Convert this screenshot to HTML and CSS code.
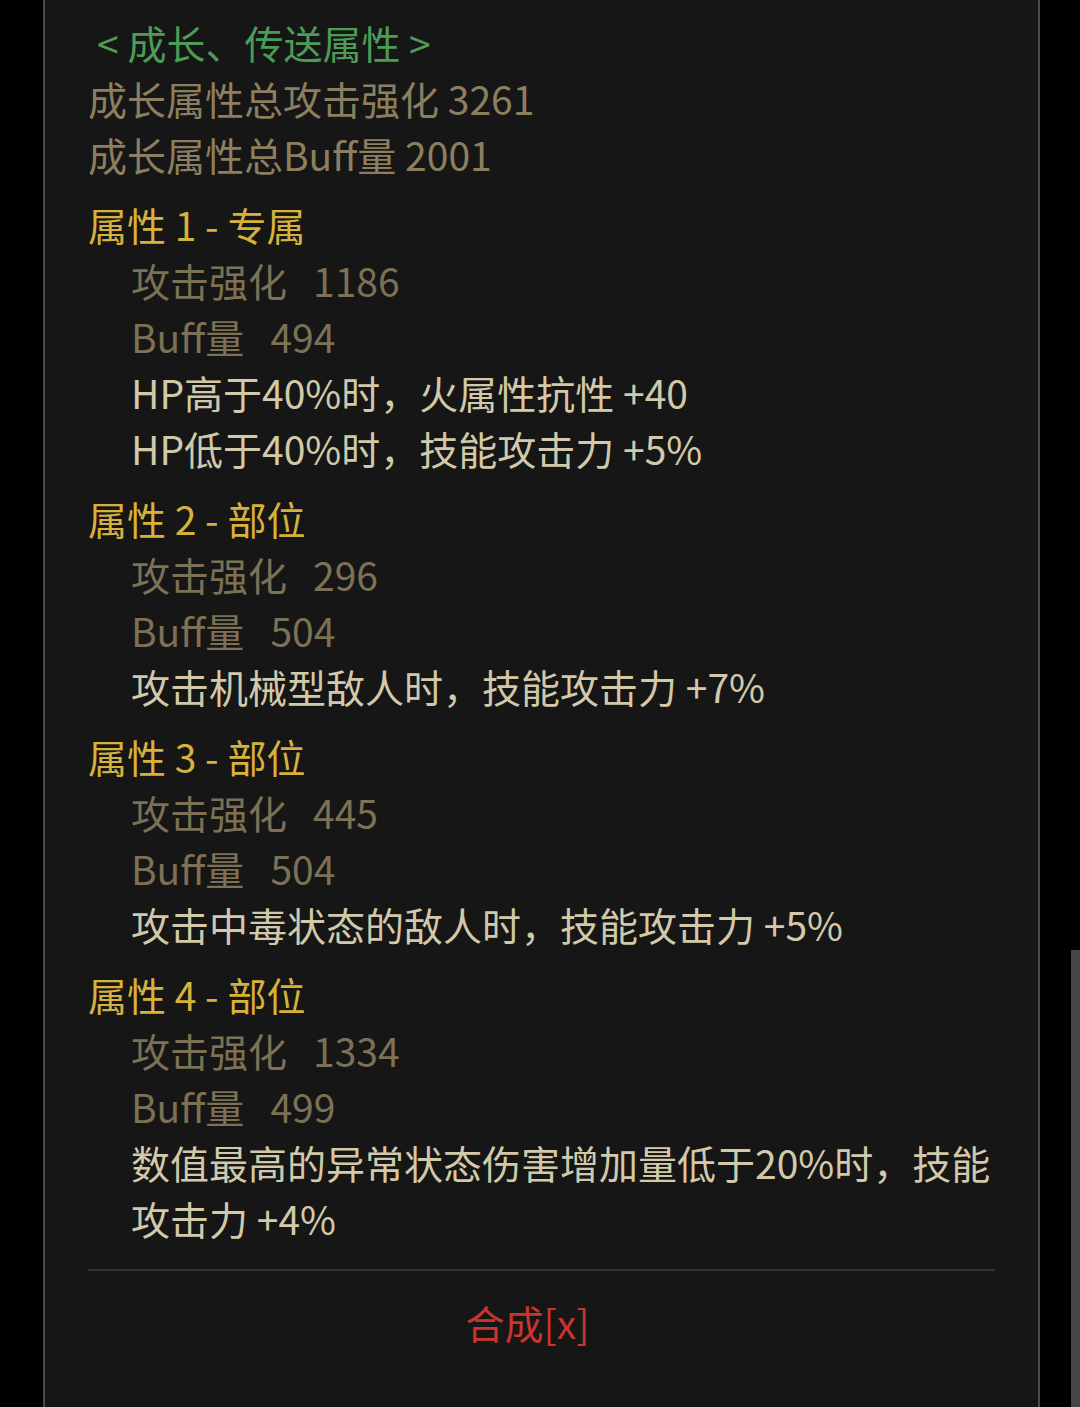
FILE: index.html
```html
<!DOCTYPE html>
<html lang="zh-CN">
<head>
<meta charset="utf-8">
<title>成长、传送属性</title>
<link rel="stylesheet" href="styles.css">
</head>
<body>
<div class="page">
  <div class="panel">
    <div class="content">
      <div class="title">&lt; 成长、传送属性 &gt;</div>
      <div class="total">成长属性总攻击强化 3261</div>
      <div class="total">成长属性总Buff量 2001</div>

      <div class="group">
        <div class="head">属性 1 - 专属</div>
        <div class="stat">攻击强化<span class="num">1186</span></div>
        <div class="stat">Buff量<span class="num">494</span></div>
        <div class="desc">HP高于40%时，火属性抗性 +40</div>
        <div class="desc">HP低于40%时，技能攻击力 +5%</div>
      </div>

      <div class="group">
        <div class="head">属性 2 - 部位</div>
        <div class="stat">攻击强化<span class="num">296</span></div>
        <div class="stat">Buff量<span class="num">504</span></div>
        <div class="desc">攻击机械型敌人时，技能攻击力 +7%</div>
      </div>

      <div class="group">
        <div class="head">属性 3 - 部位</div>
        <div class="stat">攻击强化<span class="num">445</span></div>
        <div class="stat">Buff量<span class="num">504</span></div>
        <div class="desc">攻击中毒状态的敌人时，技能攻击力 +5%</div>
      </div>

      <div class="group">
        <div class="head">属性 4 - 部位</div>
        <div class="stat">攻击强化<span class="num">1334</span></div>
        <div class="stat">Buff量<span class="num">499</span></div>
        <div class="desc">数值最高的异常状态伤害增加量低于20%时，技能攻击力 +4%</div>
      </div>

      <div class="divider"></div>
      <div class="action">合成[x]</div>
    </div>
  </div>
  <div class="scrollbar"></div>
</div>
</body>
</html>
```

FILE: styles.css
```css
html, body {
  margin: 0;
  padding: 0;
  background: #000;
  height: 100%;
}

body {
  font-family: "Noto Sans CJK SC", "Noto Sans", sans-serif;
  font-size: 39px;
  line-height: 56px;
  overflow: hidden;
}

.page {
  position: relative;
  height: 1407px;
  display: flex;
}

.panel {
  margin-left: 43px;
  width: 993px;
  height: 100%;
  background: #161616;
  border-left: 2px solid #4a4a4a;
  border-right: 2px solid #4a4a4a;
}

.content {
  padding: 14px 43px 0 43px;
}

.title {
  color: #4e9b57;
  font-size: 39px;
  padding-left: 9px;
}

.total {
  color: #8c7f5f;
}

.group {
  margin-top: 14px;
}

.head {
  color: #d6b23c;
}

.stat,
.desc {
  padding-left: 43px;
}

.stat {
  color: #7d7155;
}

.stat .num {
  margin-left: 26px;
}

.desc {
  color: #d2c9aa;
}

.divider {
  margin-top: 23px;
  height: 2px;
  background: #353535;
}

.action {
  color: #c6362f;
  text-align: center;
  padding-right: 28px;
  margin-top: 23px;
}

.scrollbar {
  position: absolute;
  right: 0;
  top: 950px;
  width: 9px;
  bottom: 0;
  background: #454545;
}
```
